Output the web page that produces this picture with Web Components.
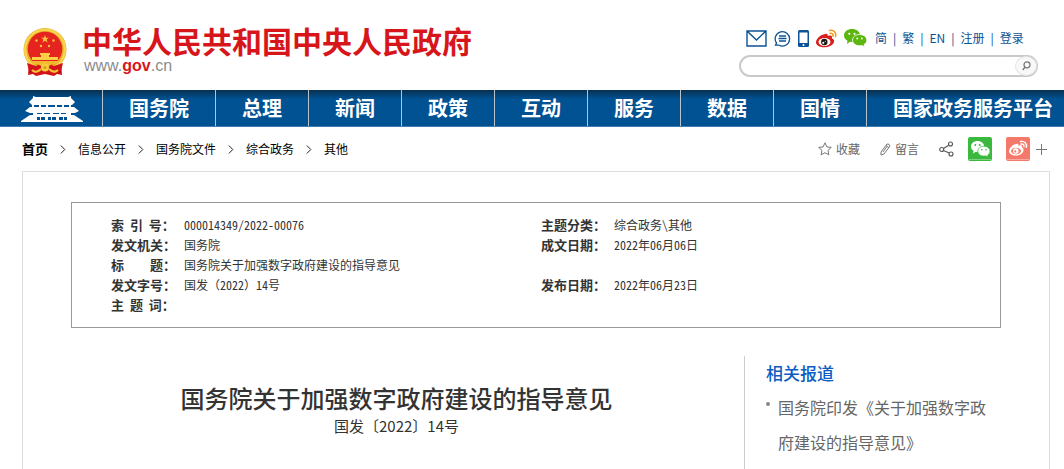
<!DOCTYPE html>
<html lang="zh-CN">
<head>
<meta charset="utf-8">
<title>国务院关于加强数字政府建设的指导意见</title>
<style>
	body {
		margin: 0;
		min-height: 100vh;
		display: flex;
		flex-direction: column;
		overflow-x: hidden;
		background: #fff;
		color: #333;
		font: 12px/20px "Noto Sans CJK SC", sans-serif;
	}
	doc-page {
		flex: 1;
	}
</style>
</head>
<body>
<gov-header>
	<span slot="name">中华人民共和国中央人民政府</span>
</gov-header>

<gov-nav>
	<nav-item>国务院</nav-item>
	<nav-item>总理</nav-item>
	<nav-item>新闻</nav-item>
	<nav-item>政策</nav-item>
	<nav-item>互动</nav-item>
	<nav-item>服务</nav-item>
	<nav-item>数据</nav-item>
	<nav-item>国情</nav-item>
	<nav-item>国家政务服务平台</nav-item>
</gov-nav>

<crumb-bar>
	<crumb-item home>首页</crumb-item>
	<crumb-item>信息公开</crumb-item>
	<crumb-item>国务院文件</crumb-item>
	<crumb-item>综合政务</crumb-item>
	<crumb-item>其他</crumb-item>
</crumb-bar>

<doc-page>
	<doc-meta slot="meta"></doc-meta>
	<doc-heading slot="article">
		国务院关于加强数字政府建设的指导意见
		<span slot="number">国发〔2022〕14号</span>
	</doc-heading>
	<related-news slot="aside">
		<span slot="title">相关报道</span>
		国务院印发《关于加强数字政府建设的指导意见》
	</related-news>
</doc-page>

<script>
const ICONS = {
	emblem: `<svg width="46" height="49" viewBox="0 0 46 49">
		<path d="M7 34L6 47l5-1 3 2 9-2 9 2 3-2 5 1-1-13z" fill="#d3151b"/>
		<path d="M9 39l-1 6M37 39l1 6" stroke="#8f1014"/>
		<circle cx="23" cy="21.500" r="21.500" fill="#e5ab22"/>
		<circle cx="23" cy="21.500" r="19.800" fill="none" stroke="#f9d54f" stroke-width="2.400"/>
		<circle cx="23" cy="21" r="17.300" fill="#e5231f"/>
		<path d="M5 35l9 3 5-2h8l5 2 9-3-2 8-7-1-4 4-5-2-5 2-4-4-7 1z" fill="#d3151b"/>
		<path d="M23 7l1 2.800h2.900l-2.300 1.800.9 2.800-2.500-1.700-2.500 1.700.9-2.800-2.300-1.800H22z" fill="#fbc53a"/>
		<g fill="#fbc53a"><circle cx="14.500" cy="12.500" r="1.200"/><circle cx="31.500" cy="12.500" r="1.200"/><circle cx="19" cy="18" r="1.200"/><circle cx="27" cy="18" r="1.200"/></g>
		<path d="M18 25h10v2h-1v2h9v3H10v-3h9v-2h-1z" fill="#fbcf45"/>
		<path d="M8 33h30l-3 3q-7 0-9 3h-6q-2-3-9-3z" fill="#f0b92f"/>
		<circle cx="23" cy="39.500" r="4" fill="#f7cb3e"/><circle cx="23" cy="39.500" r="1.600" fill="#d99a1a"/>
		<path d="M19 41q-5 5-9 1M27 41q5 5 9 1" stroke="#f4c437" stroke-width="2.200" fill="none"/>
	</svg>`,
	mail: `<svg width="21" height="17" viewBox="0 0 21 17" fill="none" stroke="#0b5394" stroke-width="1.400">
		<path d="M1 1h19v15H1zM1 1l9.500 9L20 1"/>
	</svg>`,
	chat: `<svg width="17" height="17" viewBox="0 0 17 17" fill="none" stroke="#0b5394" stroke-width="1.300">
		<path d="M2.500 13A7.200 7.200 0 1 1 5 15.200H1.500zM5 6h7M4.500 8.500h8M5 11h7"/>
	</svg>`,
	phone: `<svg width="11" height="17" viewBox="0 0 11 17">
		<rect width="11" height="17" rx="1.500" fill="#0b5394"/><path d="M1.500 2.500h8v10.500h-8z" fill="#fff"/><circle cx="5.500" cy="15" r="1" fill="#fff"/>
	</svg>`,
	weibo: `<svg width="21" height="19" viewBox="0 0 21 19">
		<path d="M8 5.500c1-1 4-1.500 3.800 1.500 3-1 5-.3 4 2.300 5 1.700 1.800 9-7.300 9C3 18.300 0 16 0 13.300 0 10 5 5 8 5.500z" fill="#d81e1a"/>
		<ellipse cx="8.500" cy="13" rx="6" ry="4" fill="#fff"/>
		<circle cx="8.300" cy="13" r="3.200" fill="#1d1614"/><circle cx="7.300" cy="13.800" r="1.100" fill="#fff"/><circle cx="9.300" cy="12.300" r=".5" fill="#fff"/>
		<path d="M13.500 1.500c4-1 7 2 6 6M14 4.300c2-.4 3.500 1 3 3" stroke="#f39a1f" stroke-width="1.500" fill="none" stroke-linecap="round"/>
	</svg>`,
	wechat: `<svg width="23" height="18" viewBox="0 0 23 18">
		<path d="M8 0c4.500 0 8 2.700 8 6.400S12.500 13 8 13l-2-.3L3 15l.5-3.200C1.300 10.600 0 8.700 0 6.400 0 2.700 3.500 0 8 0z" fill="#5cb60f"/>
		<path d="M15.500 5.500c4 0 7.300 2.400 7.300 5.600 0 1.900-1 3.500-2.800 4.500l.5 2.400-2.600-1.500-2.400.3c-4 0-7-2.500-7-5.700s3-5.600 7-5.600z" fill="#5cb60f" stroke="#fff" stroke-width=".8"/>
		<g fill="#fff"><circle cx="5.300" cy="4.800" r="1.100"/><circle cx="10.500" cy="4.800" r="1.100"/><circle cx="13.300" cy="9.500" r=".9"/><circle cx="17.800" cy="9.500" r=".9"/></g>
	</svg>`,
	search: `<svg width="9" height="10" viewBox="0 0 9 10" fill="none" stroke="#777" stroke-width="1.300">
		<circle cx="5" cy="3.800" r="3"/><path d="M3 6L.8 9"/>
	</svg>`,
	gate: `<svg width="62" height="26" viewBox="0 0 62 26" fill="#fff">
		<path d="M12 0l3 1h32l3-1v2l4 4-3 3H11L8 6l4-4z"/>
		<path d="M11 8h2v5h-2zM18 8h2v5h-2zM25 8h2v5h-2zM34 8h2v5h-2zM41 8h2v5h-2zM48 8h2v5h-2z"/>
		<path d="M9 11h44l5 4-4 2H9l-5-2z"/>
		<path d="M12 16h38v4H12z"/>
		<path d="M16 17h5v1h-5zM23 17h6v1h-6zM32 17h6v1h-6zM40 17h5v1h-5z" fill="#015293"/>
		<path d="M9 19h44l9 6v1H0v-1z"/>
		<path d="M16 21h8v3h-8zM27 21h8v3h-8zM38 21h8v3h-8z" fill="#015293"/>
		<path d="M19 20h1v5h-1zM30 20h1v5h-1zM42 20h1v5h-1z"/>
	</svg>`,
	star: `<svg width="14" height="14" viewBox="0 0 14 14" fill="none" stroke="#777" stroke-linejoin="round">
		<path d="M7 .8l1.900 4.100 4.400.5-3.300 3 .9 4.500L7 10.700l-3.900 2.200.9-4.500-3.300-3 4.400-.5z"/>
	</svg>`,
	pencil: `<svg width="11" height="13" viewBox="0 0 11 13" fill="none" stroke="#777" stroke-linejoin="round">
		<path d="M1 12V9l6-8q2.500-.5 3 2l-6 8zM6 2.500l3 2.300M3 9l4-5.500"/>
	</svg>`,
	share: `<svg width="15" height="16" viewBox="0 0 15 16" fill="none" stroke="#555" stroke-width="1.100">
		<circle cx="2.700" cy="8.500" r="2"/><circle cx="11.500" cy="3" r="2"/><circle cx="12" cy="13" r="2"/><path d="M4.500 7.500l5.200-3.300M4.500 9.500l5.700 2.500"/>
	</svg>`,
	wechatTile: `<svg width="24" height="24" viewBox="0 0 24 24">
		<rect width="24" height="24" rx="2" fill="#3bb93f"/><path d="M1 22.500h22" stroke="#7ed281"/>
		<path d="M9.500 4c3.800 0 6.700 2.400 6.700 5.500S13.300 15 9.500 15l-1.700-.2L5 16.500l.6-2.700C3.900 12.800 3 11.300 3 9.500 3 6.400 5.700 4 9.500 4z" fill="#fff"/>
		<path d="M15.900 9.200c3.500 0 6.100 2.200 6.100 5 0 1.600-.9 3-2.300 3.900l.4 2-2.200-1.200-2 .2c-3.500 0-6.100-2.200-6.100-4.900s2.600-5 6.100-5z" fill="#fff" stroke="#3bb93f" stroke-width=".8"/>
		<g fill="#3bb93f"><circle cx="7.300" cy="8" r="1"/><circle cx="11.700" cy="8" r="1"/><circle cx="13.700" cy="12.700" r=".8"/><circle cx="18" cy="12.700" r=".8"/></g>
	</svg>`,
	weiboTile: `<svg width="24" height="24" viewBox="0 0 24 24">
		<rect width="24" height="24" rx="2" fill="#f5796a"/><path d="M1 22.500h22" stroke="#f9aaa0"/>
		<path d="M9.500 7.200c1-.8 3.200-.8 2.900 1.500 2.600-.8 4.200-.2 3.500 1.900 3.700 1.500 1 8-5.900 8-4.200 0-7-1.900-7-4.500 0-2.800 4.300-7.300 6.500-6.900z" fill="#fff"/>
		<ellipse cx="10" cy="14" rx="5" ry="3.300" fill="#f5796a"/><circle cx="9.800" cy="14" r="2.800" fill="#fff"/><circle cx="9.300" cy="14.400" r="1.100" fill="#f5796a"/>
		<path d="M14.500 4.500c4-.8 6.700 2 5.900 5.800M15 7c2-.4 3.400 1 2.900 2.900" stroke="#fff" stroke-width="1.400" fill="none" stroke-linecap="round"/>
	</svg>`,
	plus: `<svg width="11" height="11" viewBox="0 0 11 11" stroke="#777"><path d="M0 5.500h11M5.500 0v11"/></svg>`,
	chevron: `<svg width="6" height="9" viewBox="0 0 6 9" fill="none" stroke="#222"><path d="M.8 .5l4 4-4 4"/></svg>`
}

class GovElement extends HTMLElement {
	constructor() {
		super()
		this.attachShadow( { mode: 'open' } )
	}

	connectedCallback() {
		const template = document.createElement( 'template' )
		template.innerHTML = `
			<style>
				a {
					color: inherit;
					text-decoration: none;
				}
				button {
					border: none;
					background: none;
					padding: 0;
					color: inherit;
					font: inherit;
					display: flex;
					align-items: center;
				}
				svg {
					display: block;
					flex: none;
				}
			</style>
			${ this.render() }
		`
		this.shadowRoot.replaceChildren( template.content.cloneNode( true ) )
	}
}

class GovHeader extends GovElement {
	render() {
		return `
			<style>
				:host {
					display: flex;
					justify-content: space-between;
					align-items: flex-start;
					height: 90px;
					padding: 0 26px 0 22px;
				}
				.brand {
					display: flex;
					gap: 14px;
					padding-top: 22px;
				}
				.brand svg {
					margin-top: 6px;
				}
				.name {
					font-size: 30px;
					line-height: 36px;
					font-weight: bold;
					color: #d7161b;
					white-space: nowrap;
				}
				.url {
					font: 16px/16px "Liberation Sans", sans-serif;
					color: #8c8c8c;
					padding-left: 2px;
				}
				.url b {
					color: #d7161b;
				}
				.tools {
					width: 299px;
					padding-top: 28px;
				}
				.links {
					display: flex;
					align-items: center;
					gap: 6px;
					padding-left: 7px;
					color: #0b5394;
					white-space: nowrap;
				}
				.icons {
					display: flex;
					align-items: center;
					gap: 7px;
					margin-right: 2px;
				}
				.search {
					display: flex;
					align-items: center;
					box-sizing: border-box;
					height: 22px;
					margin-top: 7px;
					border: 2px solid #c9c9c9;
					border-radius: 11px;
				}
				.search input {
					flex: 1;
					min-width: 0;
					border: none;
					outline: none;
					background: none;
					padding: 0 10px;
					font: inherit;
				}
				.search button {
					width: 20px;
					height: 18px;
					justify-content: center;
					border-radius: 50%;
					background: #f8f8f8;
					box-shadow: 0 0 0 1px #e4e4e4;
				}
			</style>
			<a class="brand" href="#">
				${ ICONS.emblem }
				<div>
					<div class="name"><slot name="name"></slot></div>
					<div class="url">www.<b>gov</b>.cn</div>
				</div>
			</a>
			<div class="tools">
				<div class="links">
					<div class="icons">
						<a href="#" aria-label="邮箱">${ ICONS.mail }</a>
						<a href="#" aria-label="互动">${ ICONS.chat }</a>
						<a href="#" aria-label="客户端">${ ICONS.phone }</a>
						<a href="#" aria-label="微博">${ ICONS.weibo }</a>
						<a href="#" aria-label="微信">${ ICONS.wechat }</a>
					</div>
					<a href="#">简</a><span>|</span>
					<a href="#">繁</a><span>|</span>
					<a href="#">EN</a><span>|</span>
					<a href="#">注册</a><span>|</span>
					<a href="#">登录</a>
				</div>
				<form class="search">
					<input type="text" aria-label="搜索">
					<button type="button" aria-label="搜索">${ ICONS.search }</button>
				</form>
			</div>
		`
	}
}
customElements.define( 'gov-header', GovHeader )

class GovNav extends GovElement {
	render() {
		return `
			<style>
				:host {
					display: block;
					color: #fff;
					background: linear-gradient( #08304f, #015293 9px );
					border-bottom: 1px solid #3f7db3;
				}
				nav {
					display: flex;
					height: 36px;
				}
				.home {
					flex: none;
					width: 81px;
					padding: 6px 0 0 21px;
				}
			</style>
			<nav>
				<a class="home" href="#" aria-label="首页">${ ICONS.gate }</a>
				<slot></slot>
			</nav>
		`
	}
}
customElements.define( 'gov-nav', GovNav )

class NavItem extends GovElement {
	render() {
		return `
			<style>
				:host {
					flex: none;
					display: block;
					border-left: 1px solid #b9c3cb;
				}
				:host(:last-child) {
					flex: 1;
				}
				a {
					display: block;
					padding-left: 26px;
					padding-right: 26px;
					font-size: 20px;
					line-height: 36px;
					font-weight: bold;
					white-space: nowrap;
				}
				:host(:last-child) a {
					padding-right: 0;
				}
			</style>
			<a href="#"><slot></slot></a>
		`
	}
}
customElements.define( 'nav-item', NavItem )

class CrumbBar extends GovElement {
	render() {
		return `
			<style>
				:host {
					display: flex;
					justify-content: space-between;
					align-items: center;
					height: 44px;
					padding: 0 17px 0 22px;
				}
				nav, .actions {
					display: flex;
					align-items: center;
				}
				nav {
					color: #000;
				}
				.actions {
					color: #666;
				}
				button {
					gap: 4px;
					margin-left: 20px;
				}
				.tile {
					margin-left: 14px;
				}
				.more {
					margin-left: 6px;
				}
			</style>
			<nav><slot></slot></nav>
			<div class="actions">
				<button>${ ICONS.star }收藏</button>
				<button>${ ICONS.pencil }留言</button>
				<button aria-label="分享">${ ICONS.share }</button>
				<button class="tile" aria-label="微信">${ ICONS.wechatTile }</button>
				<button class="tile" aria-label="微博">${ ICONS.weiboTile }</button>
				<button class="more" aria-label="更多">${ ICONS.plus }</button>
			</div>
		`
	}
}
customElements.define( 'crumb-bar', CrumbBar )

class CrumbItem extends GovElement {
	render() {
		const home = this.hasAttribute( 'home' )
		return `
			<style>
				:host {
					display: flex;
					align-items: center;
				}
				:host([home]) {
					font-size: 13px;
					font-weight: bold;
				}
				.sep {
					width: 30px;
					display: flex;
					justify-content: center;
				}
			</style>
			${ home ? '' : `<span class="sep">${ ICONS.chevron }</span>` }
			<a href="#"><slot></slot></a>
		`
	}
}
customElements.define( 'crumb-item', CrumbItem )

class DocPage extends GovElement {
	render() {
		return `
			<style>
				:host {
					display: flex;
					flex-direction: column;
					margin: 0 14px 0 22px;
					padding: 30px 48px 0;
					border: 1px solid #ddd;
					border-bottom: none;
				}
				.columns {
					flex: 1;
					display: flex;
					gap: 22px;
					margin-top: 28px;
				}
				main {
					flex: 1;
				}
				aside {
					width: 235px;
					padding-left: 21px;
					border-left: 1px solid #ccc;
				}
			</style>
			<slot name="meta"></slot>
			<div class="columns">
				<main><slot name="article"></slot></main>
				<aside><slot name="aside"></slot></aside>
			</div>
		`
	}
}
customElements.define( 'doc-page', DocPage )

class DocMeta extends GovElement {
	render() {
		const rows = [
			[ '索  引  号：', '000014349/2022-00076', '主题分类：', '综合政务\\其他' ],
			[ '发文机关：', '国务院', '成文日期：', '2022年06月06日' ],
			[ '标　　题：', '国务院关于加强数字政府建设的指导意见', '', '' ],
			[ '发文字号：', '国发（2022）14号', '发布日期：', '2022年06月23日' ],
			[ '主  题  词：', '', '', '' ]
		]
		return `
			<style>
				:host {
					display: block;
					padding: 12px 39px;
					border: 1px solid #999;
				}
				table {
					width: 100%;
					table-layout: fixed;
					border-collapse: collapse;
				}
				.label {
					width: 73px;
				}
				.value {
					width: 42%;
				}
				th, td {
					height: 20px;
					padding: 0;
					text-align: left;
					white-space: pre;
				}
				th {
					font-size: 13px;
				}
				td {
					font-family: "Noto Sans Mono CJK SC", "Noto Sans CJK SC", sans-serif;
				}
			</style>
			<table>
				<colgroup><col class="label"><col class="value"><col class="label"><col></colgroup>
				${ rows.map( row => `<tr>${ row.map( ( text, i ) => i % 2 || ! text ? `<td>${ text }</td>` : `<th scope="row">${ text }</th>` ).join( '' ) }</tr>` ).join( '' ) }
			</table>
		`
	}
}
customElements.define( 'doc-meta', DocMeta )

class DocHeading extends GovElement {
	render() {
		return `
			<style>
				:host {
					display: block;
					padding-top: 24px;
					text-align: center;
				}
				h1 {
					margin: 0;
					font-size: 24px;
					line-height: 36px;
					font-weight: 500;
				}
				p {
					margin: 0;
					font-size: 15px;
				}
			</style>
			<h1><slot></slot></h1>
			<p><slot name="number"></slot></p>
		`
	}
}
customElements.define( 'doc-heading', DocHeading )

class RelatedNews extends GovElement {
	render() {
		return `
			<style>
				:host {
					display: block;
				}
				h2 {
					margin: 0;
					font-size: 17px;
					line-height: 34px;
					font-weight: 500;
					color: #0a5dc2;
				}
				ul {
					margin: 0;
					padding: 0;
					list-style: none;
				}
				li {
					display: flex;
					gap: 8px;
					font-size: 16px;
					line-height: 35px;
					color: #666;
				}
				li::before {
					content: "";
					flex: none;
					width: 4px;
					height: 4px;
					margin-top: 12px;
					border-radius: 50%;
					background: #888;
				}
			</style>
			<h2><slot name="title"></slot></h2>
			<ul>
				<li><a href="#"><slot></slot></a></li>
			</ul>
		`
	}
}
customElements.define( 'related-news', RelatedNews )
</script>
</body>
</html>
